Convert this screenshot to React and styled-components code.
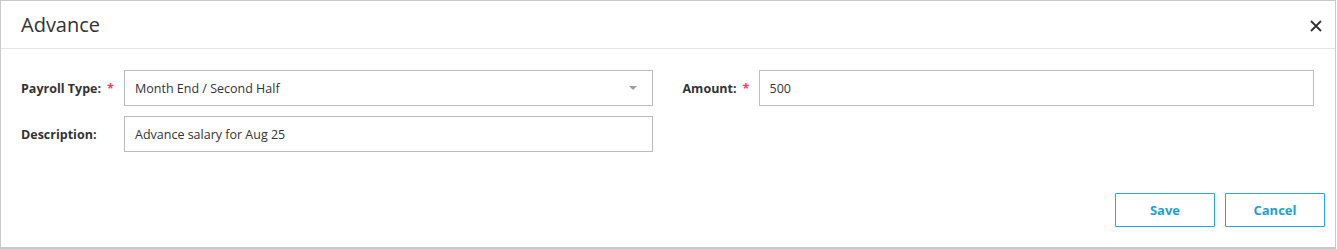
import React from "react";
import styled, { createGlobalStyle } from "styled-components";

const Global = createGlobalStyle`
  html, body { margin: 0; padding: 0; background: #fff; }
  body { font-family: "Open Sans", "Liberation Sans", sans-serif; color: #333; }
  * { box-sizing: border-box; }
`;

const Modal = styled.div`
  width: 1336px;
  height: 249px;
  border: 1px solid #c9c9c9;
  border-bottom-width: 2px;
  background: #fff;
  display: flex;
  flex-direction: column;
`;

const Header = styled.div`
  height: 48px;
  border-bottom: 1px solid #e5e5e5;
  display: flex;
  align-items: center;
  justify-content: space-between;
  padding: 0 12px 0 20px;
`;

const Title = styled.h4`
  margin: 0;
  font-size: 20px;
  font-weight: 400;
  color: #333;
  line-height: 1;
  padding-top: 1px;
`;

const Close = styled.button`
  border: 0;
  background: none;
  padding: 0;
  width: 14px;
  height: 14px;
  display: flex;
  align-items: center;
  justify-content: center;
  cursor: pointer;
  margin-top: 2px;
`;

const Body = styled.div`
  padding: 21px 21px 0 20px;
  display: grid;
  grid-template-columns: 1fr 1fr;
  row-gap: 10px;
`;

const Field = styled.div`
  display: flex;
  align-items: center;
  padding-left: ${(p) => (p.$right ? "15px" : "0")};
  padding-right: ${(p) => (p.$right ? "0" : "15px")};
`;

const Label = styled.label`
  flex: 0 0 ${(p) => p.$w}px;
  font-size: 12.5px;
  font-weight: 700;
  color: #333;
  white-space: nowrap;
`;

const Req = styled.span`
  color: #ef3f5f;
  margin-left: 6px;
`;

const InputBox = styled.div`
  flex: 1;
  height: 36px;
  border: 1px solid #bcbcbc;
  display: flex;
  align-items: center;
  justify-content: space-between;
  padding: 0 14px 0 10px;
  font-size: 12.5px;
  color: #333;
`;

const Caret = styled.span`
  width: 0;
  height: 0;
  border-left: 4px solid transparent;
  border-right: 4px solid transparent;
  border-top: 4px solid #9aa0a6;
  margin-right: 1px;
`;

const Footer = styled.div`
  margin-top: auto;
  display: flex;
  justify-content: flex-end;
  gap: 10px;
  padding: 0 10px 20px 0;
`;

const Button = styled.button`
  width: 100px;
  height: 34px;
  background: #fff;
  border: 1px solid #27a6df;
  border-radius: 1px;
  color: #1e9fdb;
  font-family: "Open Sans", "Liberation Sans", sans-serif;
  font-size: 13px;
  font-weight: 700;
  cursor: pointer;
`;

export default function App() {
  return (
    <>
      <Global />
      <Modal>
        <Header>
          <Title>Advance</Title>
          <Close aria-label="Close">
            <svg width="12" height="12" viewBox="0 0 12 12">
              <path d="M1 1L11 11M11 1L1 11" stroke="#333" strokeWidth="1.8" />
            </svg>
          </Close>
        </Header>
        <Body>
          <Field>
            <Label $w={103}>
              Payroll Type:<Req>*</Req>
            </Label>
            <InputBox>
              Month End / Second Half
              <Caret />
            </InputBox>
          </Field>
          <Field $right>
            <Label $w={76}>
              Amount:<Req>*</Req>
            </Label>
            <InputBox>500</InputBox>
          </Field>
          <Field>
            <Label $w={103}>Description:</Label>
            <InputBox>Advance salary for Aug 25</InputBox>
          </Field>
        </Body>
        <Footer>
          <Button>Save</Button>
          <Button>Cancel</Button>
        </Footer>
      </Modal>
    </>
  );
}
